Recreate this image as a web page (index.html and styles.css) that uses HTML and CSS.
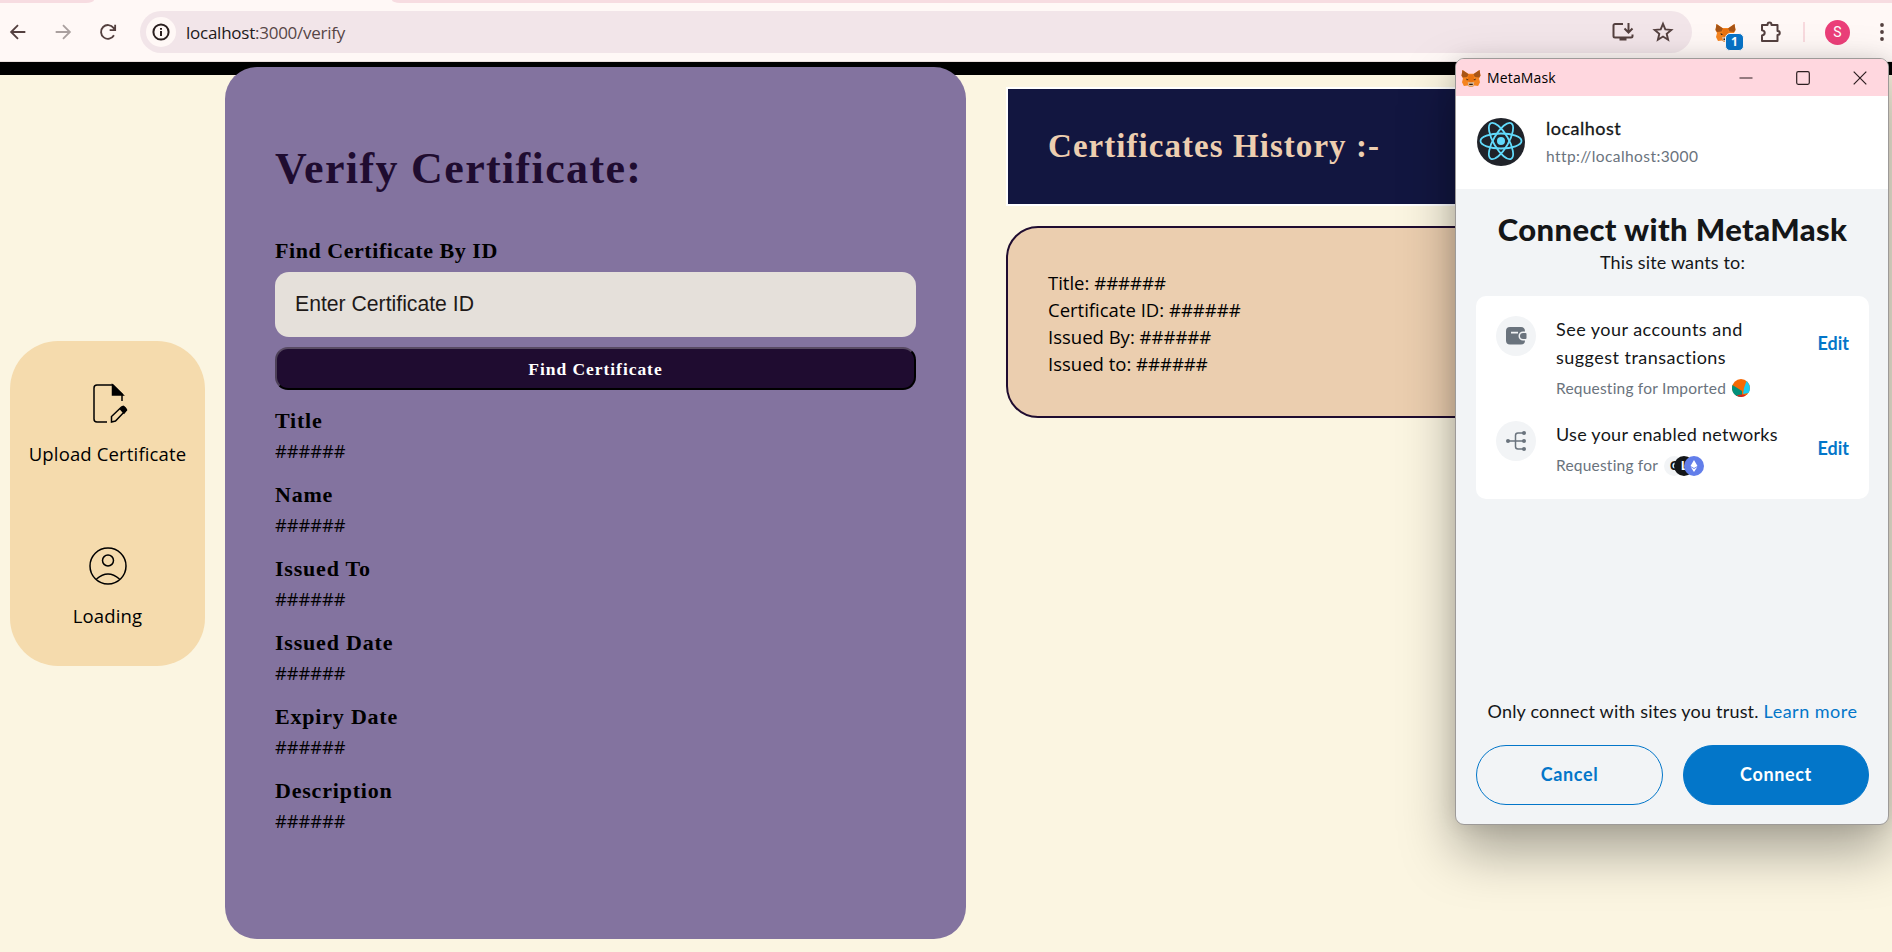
FILE: index.html
```
<!DOCTYPE html>
<html lang="en">
<head>
<meta charset="utf-8">
<title>Verify Certificate</title>
<link rel="stylesheet" href="styles.css">
</head>
<body>
<svg class="defs" width="0" height="0">
  <symbol id="fox" viewBox="0 0 20 19">
    <path fill="#f5841f" d="M1 1l6 4h6l6-4 1 6-1.500 3 1 4-2 4-4-.5-2 1.500H8.500l-2-1.500-4 .5-2-4 1-4L0 7z"/>
    <path fill="#a85516" d="M1 1l6.500 4.500L6 8.500 1.500 9 0 7zM19 1l-6.500 4.500L14 8.500l4.500.5L20 7z"/>
    <path fill="#e8720f" d="M7.500 6h5l1 6-3.500 3-3.500-3z"/>
    <path fill="#d9b89b" d="M6.500 14h7l-1 4.500h-5z"/>
    <path fill="#2b1c12" d="M5 10l2.500 1.500-2 .5zM15 10l-2.500 1.500 2 .5zM8.300 15.500h3.400l.3 1.500H8z"/>
  </symbol>
</svg>
<header class="toolbar">
  <div class="tabs"><i class="tab-left"></i><i class="tab-right"></i></div>
  <div class="toolbar-row">
    <svg class="nav" viewBox="0 0 24 24"><path d="M20 12H5M12 4.500L4.500 12l7.500 7.500"/></svg>
    <svg class="nav dim" viewBox="0 0 24 24"><path d="M4 12h15M12 4.500l7.500 7.500-7.500 7.500"/></svg>
    <svg class="nav" viewBox="0 0 24 24"><path d="M18.500 15.500A7.500 7.500 0 1 1 18 7.500L19.500 9.500M19.800 4v6h-6"/></svg>
    <div class="omnibox">
      <span class="info"><svg viewBox="0 0 20 20"><circle cx="10" cy="10" r="7.600"/><path d="M10 9v5M10 6v1.800"/></svg></span>
      <span class="url"><b>localhost</b>:3000/verify</span>
      <svg class="box-icon install" viewBox="0 0 24 22"><path d="M12 3H4a1.500 1.500 0 0 0-1.500 1.500V15A1.500 1.500 0 0 0 4 16.500h16a1.500 1.500 0 0 0 1.500-1.500v-1.500M17.500 2v9M13.500 7.500l4 4 4-4M8.500 18.500h7"/></svg>
      <svg class="box-icon star" viewBox="0 0 22 22"><path d="M11 2.800l2.300 5.600 6 .5-4.600 3.900 1.400 5.900L11 15.500l-5.100 3.200 1.400-5.900-4.600-3.900 6-.5z"/></svg>
    </div>
    <div class="extension"><svg class="ext-fox"><use href="#fox"/></svg><span class="badge">1</span></div>
    <svg class="puzzle" viewBox="0 0 22 22"><path d="M2 4h5.500c0-3.200 4-3.200 4 0h6v6c3 0 3 4 0 4v6H2v-5.500c3.600-.5 3.600-4.800 0-5.300z"/></svg>
    <i class="divider"></i>
    <span class="avatar">S</span>
    <svg class="dots" viewBox="0 0 4 20"><circle cx="2" cy="3" r="1.900"/><circle cx="2" cy="10" r="1.900"/><circle cx="2" cy="17" r="1.900"/></svg>
  </div>
</header>
<div class="strip"></div>
<main class="page">
  <nav class="sidebar">
    <a class="side-item">
      <svg class="side-icon upload" viewBox="0 0 42 42"><path d="M17 38H7q-3 0-3-3V4q0-3 3-3h16l9 9v7"/><path class="solid" d="M22.500 1v10H33z"/><path d="M21.500 38v-5.500l10-9.500q1.500-1.200 3 .2l.8.8q1.400 1.400 0 2.800L25.500 37z"/><path class="solid" d="M30.500 25l3-2.500 3 3.500-2.500 3z"/></svg>
      <span>Upload Certificate</span>
    </a>
    <a class="side-item">
      <svg class="side-icon" viewBox="0 0 42 42"><circle cx="21" cy="22" r="18"/><circle cx="21" cy="16.500" r="5.500"/><path d="M9.500 35q11.500-10 23 0"/></svg>
      <span>Loading</span>
    </a>
  </nav>
  <section class="verify">
    <h1>Verify Certificate:</h1>
    <label class="field-name">Find Certificate By ID</label>
    <div class="input">Enter Certificate ID</div>
    <button class="find">Find Certificate</button>
    <dl class="details">
      <dt>Title</dt><dd>######</dd>
      <dt>Name</dt><dd>######</dd>
      <dt>Issued To</dt><dd>######</dd>
      <dt>Issued Date</dt><dd>######</dd>
      <dt>Expiry Date</dt><dd>######</dd>
      <dt>Description</dt><dd>######</dd>
    </dl>
  </section>
  <section class="history">
    <h2>Certificates History :-</h2>
    <div class="record">
      <p>Title: ######</p><p>Certificate ID: ######</p><p>Issued By: ######</p><p>Issued to: ######</p>
    </div>
  </section>
</main>
<aside class="popup">
  <div class="titlebar">
    <svg class="title-fox"><use href="#fox"/></svg>
    <span class="title">MetaMask</span>
    <svg class="win" viewBox="0 0 14 14"><path d="M.5 7h13"/></svg>
    <svg class="win" viewBox="0 0 14 14"><rect x=".7" y=".7" width="12.600" height="12.600" rx="1.500"/></svg>
    <svg class="win" viewBox="0 0 14 14"><path d="M.7.7l12.600 12.600M13.300.7L.7 13.300"/></svg>
  </div>
  <div class="site">
    <svg class="react" viewBox="0 0 48 48"><circle cx="24" cy="24" r="24" fill="#20232a"/><g fill="none" stroke="#61dafb" stroke-width="1.800"><ellipse cx="24" cy="23" rx="20.500" ry="7.500"/><ellipse cx="24" cy="23" rx="20.500" ry="7.500" transform="rotate(60 24 23)"/><ellipse cx="24" cy="23" rx="20.500" ry="7.500" transform="rotate(120 24 23)"/></g><circle cx="24" cy="23" r="4" fill="#61dafb"/></svg>
    <div><div class="site-name">localhost</div><div class="site-url">http://localhost:3000</div></div>
  </div>
  <div class="connect">
    <h3>Connect with MetaMask</h3>
    <p class="wants">This site wants to:</p>
    <div class="perms">
      <div class="perm">
        <span class="perm-icon"><svg viewBox="0 0 20 18"><path fill="#6a737d" fill-rule="evenodd" d="M4 0h11q4 0 4 4.500h-2a4.500 4.500 0 0 0 0 9h2q0 4-4 4H4q-4 0-4-4V4q0-4 4-4zm1 4.800v1.700h7V4.800z"/><path fill="#6a737d" d="M17 6h2.500q1 0 1 1v4q0 1-1 1H17a3 3 0 0 1 0-6z"/></svg></span>
        <div class="perm-text"><p class="accounts">See your accounts and<br>suggest transactions</p>
          <p class="req"><span>Requesting for Imported</span><svg class="jazz" viewBox="0 0 18 18"><circle cx="9" cy="9" r="9" fill="#f66a04"/><path fill="#01907a" d="M.5 6L10 12v6A9 9 0 0 1 .5 6z"/><path fill="#18cdf2" d="M14.500 2A9 9 0 0 1 16.500 14L11 15l1-6z"/><path fill="#d9261c" d="M4.500 16.500q6-2 9.500 0a9 9 0 0 1-9.500 0z"/></svg></p></div>
        <a class="edit">Edit</a>
      </div>
      <div class="perm">
        <span class="perm-icon"><svg viewBox="0 0 20 20"><path fill="none" stroke="#6a737d" stroke-width="1.500" d="M2 10h16M18 2h-6q-2.500 0-2.500 2.500v11Q9.500 18 12 18h6"/><g fill="#6a737d"><circle cx="2" cy="10" r="2"/><circle cx="18" cy="2" r="2"/><circle cx="18" cy="10" r="2"/><circle cx="18" cy="18" r="2"/></g></svg></span>
        <div class="perm-text"><p class="networks">Use your enabled networks</p>
          <p class="req"><span>Requesting for</span><span class="nets"><i class="net light">G</i><i class="net dark">L</i><i class="net eth"><svg viewBox="0 0 8 12"><path fill="#fff" d="M4 0l3.500 6L4 8 .5 6zM4 9l3.300-2L4 12 .7 7z"/></svg></i></span></p></div>
        <a class="edit">Edit</a>
      </div>
    </div>
    <p class="trust">Only connect with sites you trust. <a>Learn more</a></p>
    <div class="actions"><button class="cancel">Cancel</button><button class="ok">Connect</button></div>
  </div>
</aside>
</body>
</html>
```

FILE: styles.css
```
* { box-sizing: border-box; }
html, body { margin: 0; height: 952px; overflow: hidden; }
body { position: relative; width: 1892px; background: #fbf5e1; color: #000; font-family: "Open Sans", "Noto Sans", sans-serif; display: flex; flex-direction: column; }
h1, h2, h3, p, dl, dd { margin: 0; }
svg { display: block; flex: none; overflow: visible; }
button { margin: 0; padding: 0; }
.defs { position: absolute; }

.toolbar { height: 62px; flex: none; background: #fff8f6; border-bottom: 1px solid #eadfdd; }
.tabs { display: flex; justify-content: space-between; height: 3px; }
.tab-left { width: 94px; background: #f7dce1; border-bottom-right-radius: 8px 3px; }
.tab-right { width: 1500px; background: #f7dce1; border-bottom-left-radius: 8px 3px; }
.toolbar-row { display: flex; align-items: center; height: 58px; padding-left: 7px; }
.nav { width: 22px; height: 22px; margin-right: 23px; fill: none; stroke: #54403f; stroke-width: 2; }
.dim { stroke: #aaa09f; }
.omnibox { display: flex; align-items: center; width: 1552px; height: 42px; margin-left: -2px; padding: 0 18px 0 6px; border-radius: 21px; background: #f2e5e9; flex: none; }
.info { display: grid; place-items: center; width: 30px; height: 30px; border-radius: 50%; background: #fff8f6; }
.info svg { width: 20px; height: 20px; fill: none; stroke: #2a1f1f; stroke-width: 2; }
.url { margin-left: 10px; font-size: 17px; letter-spacing: -.25px; color: #574546; white-space: nowrap; }
.url b { font-weight: 400; color: #21191a; }
.box-icon { fill: none; stroke: #54403f; stroke-width: 2; }
.install { width: 24px; height: 22px; margin-left: auto; }
.star { width: 22px; height: 22px; margin-left: 17px; stroke-width: 1.900; }
.extension { position: relative; width: 28px; height: 28px; margin-left: 23px; flex: none; }
.ext-fox { width: 21px; height: 19px; margin-top: 5px; }
.badge { position: absolute; left: 10px; top: 15px; width: 19px; height: 18px; border-radius: 5px; border: 1px solid #fff8f6; background: #0874c8; color: #fff; font: 700 12px/16px "Open Sans", sans-serif; text-align: center; }
.puzzle { width: 22px; height: 22px; margin-left: 17px; fill: none; stroke: #54403f; stroke-width: 2; stroke-linejoin: round; }
.divider { width: 2px; height: 20px; margin-left: 21px; background: #f8dade; }
.avatar { width: 25px; height: 25px; margin-left: 20px; border-radius: 50%; background: #eb3f79; color: #fff; font: 14px/25px Roboto, sans-serif; text-align: center; }
.dots { width: 4px; height: 20px; margin-left: 30px; fill: #54403f; }

.strip { height: 13px; background: #000; flex: none; }
.page { display: grid; grid-template-columns: 195px 741px 1fr; column-gap: 20px; padding-left: 10px; height: 877px; }
.sidebar { display: flex; flex-direction: column; gap: 80px; margin-top: 266px; height: 325px; padding-top: 41px; border-radius: 48px; background: #f5dbad; }
.side-item { display: flex; flex-direction: column; align-items: center; gap: 16px; height: 82px; font-size: 18.500px; line-height: 28px; letter-spacing: .15px; white-space: nowrap; }
.side-icon { width: 42px; height: 42px; fill: none; stroke: #000; stroke-width: 1.500; }
.side-icon.upload { transform: translate(3px, 2px); }
.side-icon .solid { fill: #000; }

.verify { margin-top: -8px; height: 872px; padding: 75px 50px 0; border-radius: 32px; background: #83739f; display: flex; flex-direction: column; }
.verify h1 { font: 700 44px/54px "Liberation Serif", serif; letter-spacing: 1.350px; color: #1f0c30; }
.field-name, .details dt { font: 700 22px/26px "Liberation Serif", serif; letter-spacing: .550px; }
.field-name { margin-top: 42px; }
.input { margin-top: 8px; height: 65px; padding: 0 20px; border-radius: 14px; background: #e5e0da; font: 21.200px/64px "Liberation Sans", sans-serif; color: #1f1a18; }
.find { height: 43px; margin-top: 10px; border: 2px outset #000; border-color: #584a62 #000 #000 #4d4057; border-radius: 13px; background: #1f0c30; color: #fff; font: 700 17.500px/38px "Liberation Serif", serif; letter-spacing: .950px; flex: none; }
.details { margin-top: 17px; }
.details dt { height: 28px; line-height: 28px; letter-spacing: .800px; }
.details dd { height: 31px; margin-bottom: 15px; font-size: 18.200px; line-height: 32px; }

.history { padding: 12px 10px 0 20px; display: flex; flex-direction: column; }
.history h2 { height: 119px; border: 2px solid #fff; padding-left: 40px; background: #121640; color: #edceb0; font: 700 33px/114px "Liberation Serif", serif; letter-spacing: 1.050px; }
.record { height: 192px; margin-top: 20px; padding: 41px 40px 0; border: 2px solid #1f0c30; border-radius: 32px; background: #ebceaf; }
.record p { font-size: 18.500px; line-height: 27px; }

.popup { position: absolute; left: 1455px; top: 58px; width: 434px; height: 767px; border: 1px solid #9d9a98; border-radius: 9px; overflow: hidden; background: #f2f4f6; box-shadow: 0 26px 54px rgba(0,0,0,.34), 0 0 20px rgba(0,0,0,.1); font-family: Lato, sans-serif; color: #141618; display: flex; flex-direction: column; }
.titlebar { display: flex; align-items: center; height: 37px; padding: 0 21px 0 5px; background: #ffd7df; color: #000; flex: none; }
.title-fox { width: 20px; height: 18px; }
.title { margin: 0 auto 0 6px; font: 14px "Open Sans", sans-serif; letter-spacing: .15px; }
.win { width: 14px; height: 14px; margin-left: 43px; fill: none; stroke: #2c1e20; stroke-width: 1.200; }
.site { display: flex; gap: 21px; height: 93px; padding: 21px 21px; background: #fff; flex: none; white-space: nowrap; }
.react { width: 48px; height: 48px; margin-top: 1px; }
.site-name { font-size: 18px; line-height: 22px; letter-spacing: .500px; -webkit-text-stroke: .3px; }
.site-url { margin-top: 6px; font-size: 15.500px; line-height: 22px; letter-spacing: .420px; color: #6a737d; }
.connect { flex: 1; display: flex; flex-direction: column; padding: 23px 19px 19px 20px; }
.connect h3 { font-size: 31px; font-weight: 900; line-height: 34px; letter-spacing: .400px; text-align: center; white-space: nowrap; }
.wants { margin-top: 2px; font-size: 18px; line-height: 28px; letter-spacing: .15px; text-align: center; }
.perms { height: 203px; margin-top: 20px; padding: 20px; border-radius: 10px; background: #fff; }
.perm { display: flex; height: 105px; }
.perm-icon { display: grid; place-items: center; width: 40px; height: 40px; border-radius: 50%; background: #f2f4f6; }
.perm-icon svg { width: 20px; }
.perm-text { margin: -1px 0 0 20px; white-space: nowrap; }
.accounts, .networks { font-size: 18px; line-height: 28px; }
.accounts { letter-spacing: .470px; }
.networks { letter-spacing: .270px; }
.req { display: flex; align-items: center; height: 34px; font-size: 15.500px; letter-spacing: .210px; color: #6a737d; }
.jazz { width: 18px; height: 18px; margin-left: 6px; }
.edit { margin: 13px 0 0 auto; font-size: 18px; line-height: 28px; font-weight: 700; color: #0376c9; }
.nets { display: flex; margin: 1px 0 0 6px; }
.net { display: grid; place-items: center; width: 20px; height: 20px; border-radius: 50%; margin-right: -10px; font: 700 12px "Open Sans", sans-serif; letter-spacing: 0; }
.light { background: #f2f4f6; color: #141618; }
.dark { background: #141618; color: #fff; }
.eth { background: #627eea; }
.eth svg { width: 8px; height: 12px; }
.trust { margin-top: auto; font-size: 18px; line-height: 28px; letter-spacing: .200px; text-align: center; white-space: nowrap; }
.trust a { color: #0376c9; letter-spacing: .500px; }
.actions { display: grid; grid-template-columns: 187px 186px; gap: 20px; margin-top: 20px; }
.actions button { height: 60px; padding-bottom: 2px; border: 1px solid #0376c9; border-radius: 30px; font: 700 18px Lato, sans-serif; letter-spacing: .650px; }
.cancel { background: transparent; color: #0376c9; }
.actions .ok { background: #0376c9; color: #fff; }
```
